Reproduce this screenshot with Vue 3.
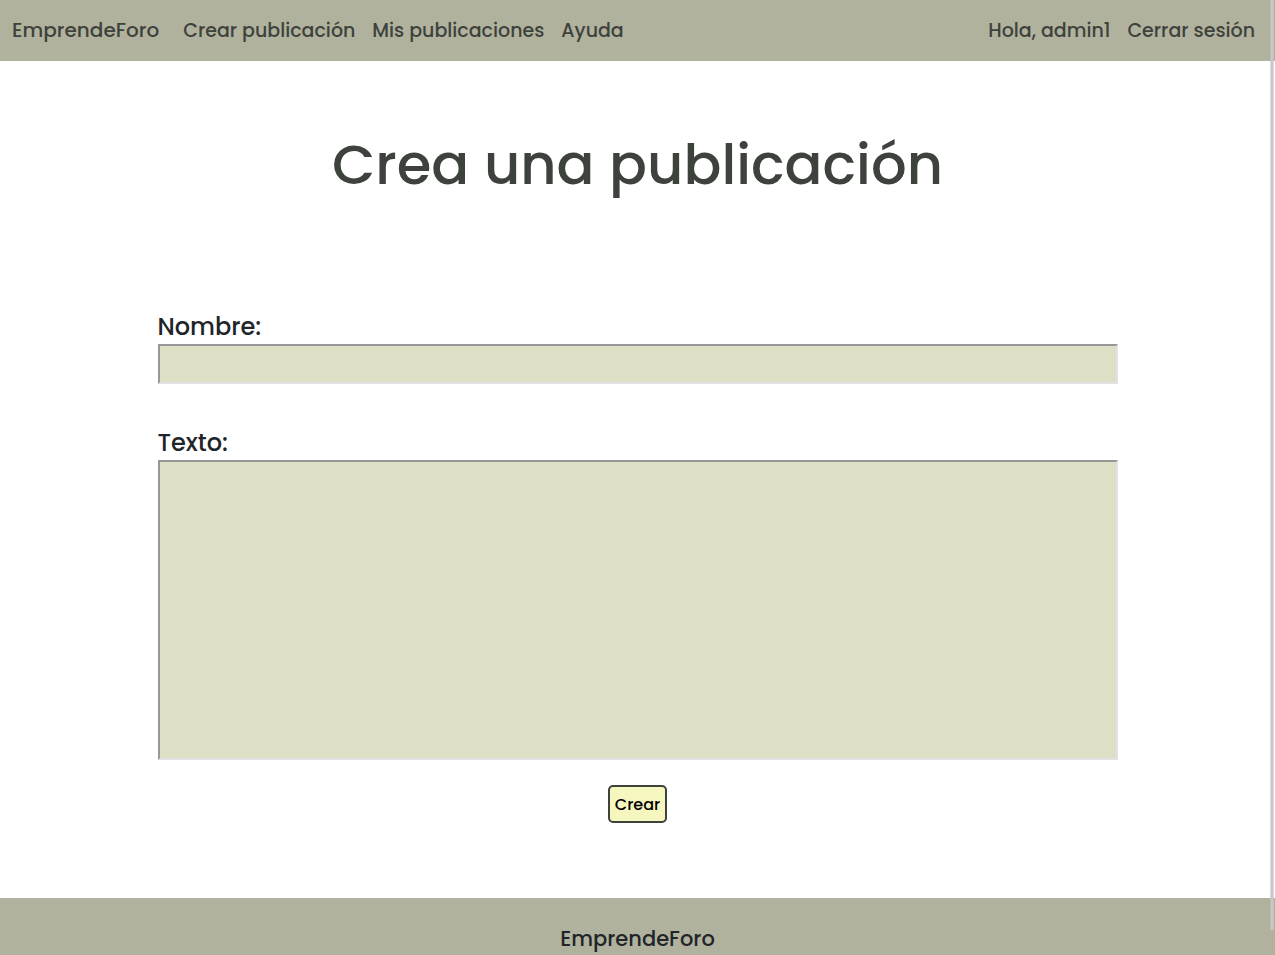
<script setup>
import { ref } from 'vue'

const links = ['Crear publicación', 'Mis publicaciones', 'Ayuda']
const nombre = ref('')
const texto = ref('')
</script>

<template>
  <div class="page">
    <header class="navbar">
      <a class="brand" href="#">EmprendeForo</a>
      <nav class="links">
        <a v-for="link in links" :key="link" href="#">{{ link }}</a>
      </nav>
      <div class="session">
        <span>Hola, admin1</span>
        <a href="#">Cerrar sesión</a>
      </div>
    </header>

    <main>
      <h1>Crea una publicación</h1>
      <form @submit.prevent>
        <label for="nombre">Nombre:</label>
        <input id="nombre" v-model="nombre" type="text" />
        <label for="texto">Texto:</label>
        <textarea id="texto" v-model="texto"></textarea>
        <button type="submit">Crear</button>
      </form>
    </main>

    <footer>EmprendeForo</footer>
    <div class="scroll-thumb" aria-hidden="true"></div>
  </div>
</template>

<style>
html {
  scrollbar-width: none;
}
body {
  margin: 0;
}
</style>

<style scoped>
.page {
  font-family: Poppins, Inter, "Liberation Sans", sans-serif;
  font-weight: 500;
  color: #212529;
  background: #fff;
}
.navbar {
  display: flex;
  align-items: baseline;
  padding: 15px 20px 15px 12px;
  background: #b0b29d;
  color: #3e423c;
  font-size: 19px;
  line-height: 30px;
}
.navbar a {
  color: inherit;
  text-decoration: none;
}
.brand {
  font-size: 20px;
}
.links,
.session {
  display: flex;
  gap: 17px;
}
.links {
  margin-left: 24px;
}
.session {
  margin-left: auto;
}
main {
  padding: 60px 24px 75px;
}
h1 {
  margin: 0 0 101px;
  color: #3e423c;
  font-size: 56px;
  font-weight: 500;
  line-height: 88px;
  text-align: center;
}
form {
  display: flex;
  flex-direction: column;
  max-width: 960px;
  margin: 0 auto;
}
label {
  font-size: 24px;
  line-height: 34px;
}
input,
textarea {
  box-sizing: border-box;
  width: 100%;
  margin: 0;
  padding: 4px 8px;
  border: 2px solid;
  border-color: #979797 #e2e2e2 #e2e2e2 #979797;
  border-radius: 0;
  background: #dfdfc5;
  color: #212529;
  font: inherit;
  font-size: 20px;
}
input {
  height: 40px;
  margin-bottom: 42px;
}
textarea {
  height: 300px;
  margin-bottom: 25px;
  resize: none;
}
button {
  align-self: center;
  padding: 6px 5px 4px;
  border: 2px solid #3e423c;
  border-radius: 5px;
  background: #f6f6bf;
  color: #000;
  font: inherit;
  font-size: 16px;
  line-height: 24px;
}
footer {
  padding: 25px 24px 24px;
  background: #b0b29d;
  font-size: 21px;
  line-height: 32px;
  text-align: center;
}
.scroll-thumb {
  position: fixed;
  top: 0;
  right: 1px;
  bottom: 25px;
  width: 2px;
  border: solid rgba(198, 198, 198, 0.6);
  border-width: 0 1px;
  background: #c8c8c8;
  background-clip: padding-box;
}
</style>
